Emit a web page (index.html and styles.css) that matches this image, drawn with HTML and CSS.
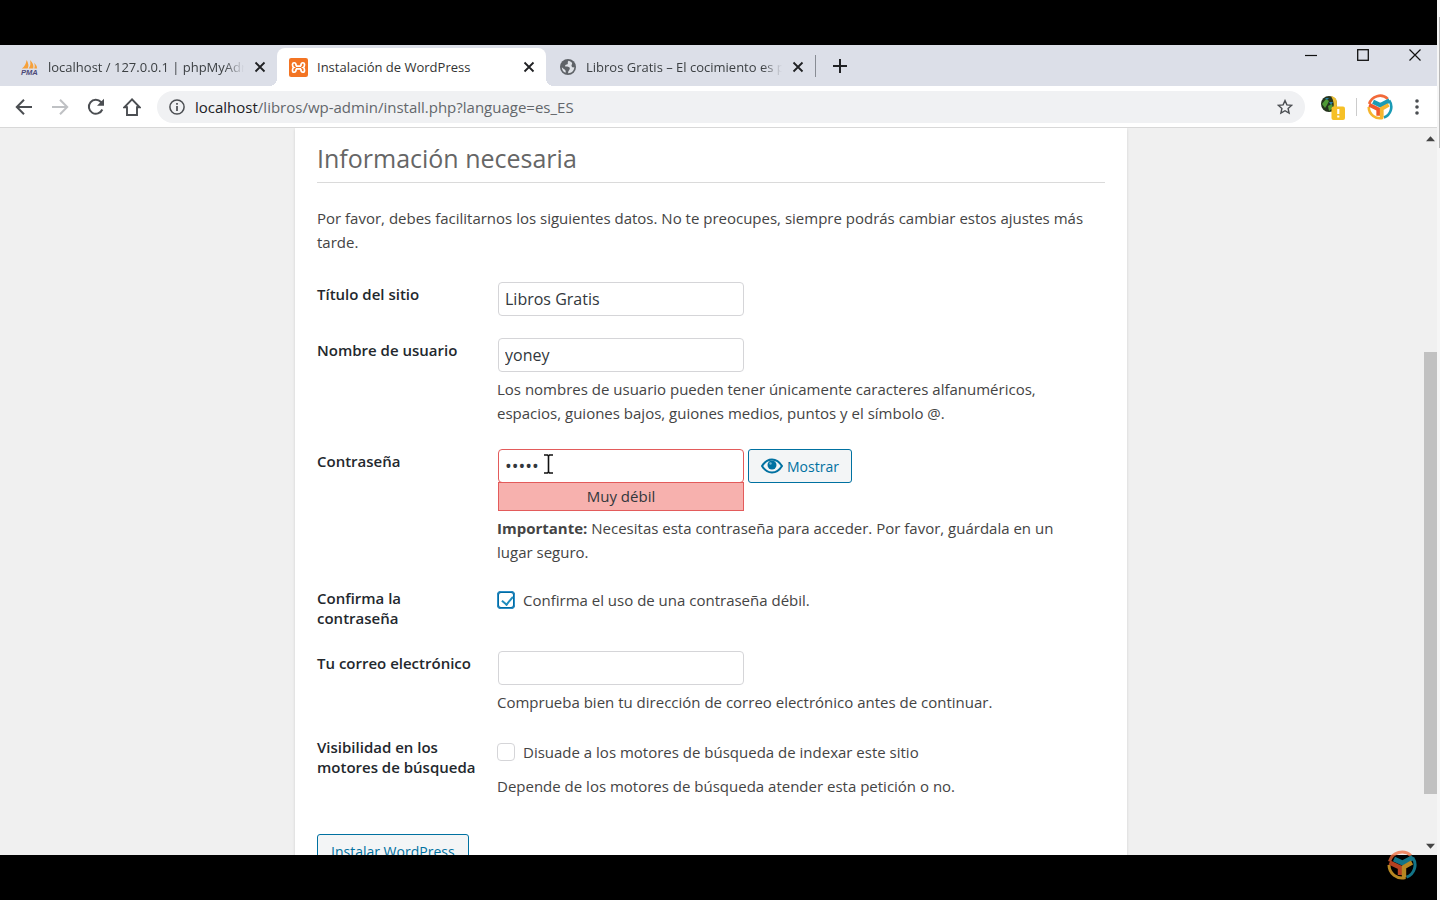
FILE: index.html
```html
<!DOCTYPE html>
<html lang="es">
<head>
<meta charset="utf-8">
<title>Instalación de WordPress</title>
<link rel="stylesheet" href="styles.css">
</head>
<body>
<svg class="defs" aria-hidden="true">
  <symbol id="close" viewBox="0 0 12 12"><path d="M1.500 1.500l9 9M10.500 1.500l-9 9" fill="none" stroke="currentColor" stroke-width="1.800"/></symbol>
  <symbol id="globe" viewBox="0 0 16 16"><circle cx="8" cy="8" r="8" fill="#5f6368"/><path d="M8.500 1.700C7 3 8.500 4 7.500 5.300 6.500 6 5 5.500 5 7.300c2 .7 4.500 0 4.800 2 .2 1.700-1.500 1.800-1.700 4.900 3.500 0 6.200-2.700 6.200-6.200-1.300 1-2.500.2-2.700-1-.5-1.300 1-1.700.4-3.300A6.200 6.200 0 0 0 8.500 1.700zM1.800 8.200c0 2.600 1.500 4.700 3.800 5.600.3-1.500.3-2.600-1-3.400C3.500 9.800 2.800 9 1.800 8.200z" fill="#dee1e6"/></symbol>
  <symbol id="brand" viewBox="0 0 30 30">
    <g fill="none" stroke-width="3">
      <path d="M2.500 11.500A13 13 0 0 1 24 5.600" stroke="#f26a3a"/>
      <path d="M25.700 7.600A13 13 0 0 1 19.500 27.200" stroke="#1a9bb5"/>
      <path d="M18.500 27.500A13 13 0 0 1 2 15" stroke="#f5b52e"/>
      <path d="M2.500 12.500l10.500 5v7.500" stroke="#f0572d" stroke-width="4.400"/>
      <path d="M7 9l8.500 4L26 7.500" stroke="#1a9bb5" stroke-width="5"/>
      <path d="M25 12.500l-8 4.500v10.500" stroke="#f5b52e" stroke-width="4.400"/>
    </g>
  </symbol>
</svg>
<div class="screen">
  <div class="window">
    <header class="tabstrip">
      <div class="tab">
        <svg class="favicon pma" viewBox="0 0 20 18"><path d="M2 10Q6 7 7 1q3 5 1 9zM9 10q3-4 1.500-9Q15 5 14 10zM15 10q1-3 0-6 3 3 3 6z" fill="#f6a13a"/><text x="1" y="17" class="pma-text">PMA</text></svg>
        <span class="tab-title">localhost / 127.0.0.1 | phpMyAdmin</span>
        <button class="tab-close" aria-label="Cerrar pestaña"><svg><use href="#close"/></svg></button>
      </div>
      <div class="tab active">
        <svg class="favicon" viewBox="0 0 18 18"><rect width="18" height="18" rx="2" fill="#f37423"/><path d="M6.500 7.700h5M6.500 10.300h5M6.800 7.600Q6.800 4.500 4.800 4.500 3.300 4.500 3.300 6.500q0 2 1.200 2.500-1.200.5-1.200 2.500 0 2 1.500 2 2 0 2-3.100M11.200 7.600q0-3.100 2-3.100 1.500 0 1.500 2 0 2-1.200 2.500 1.200.5 1.200 2.500 0 2-1.500 2-2 0-2-3.100" fill="none" stroke="#fff" stroke-width="1.600"/></svg>
        <span class="tab-title">Instalación de WordPress</span>
        <button class="tab-close" aria-label="Cerrar pestaña"><svg><use href="#close"/></svg></button>
      </div>
      <div class="tab last">
        <svg class="favicon globe"><use href="#globe"/></svg>
        <span class="tab-title">Libros Gratis – El cocimiento es poder</span>
        <button class="tab-close" aria-label="Cerrar pestaña"><svg><use href="#close"/></svg></button>
      </div>
      <span class="tab-divider"></span>
      <button class="new-tab" aria-label="Nueva pestaña"><svg viewBox="0 0 14 14"><path d="M7 0v14M0 7h14" stroke="#202124" stroke-width="2"/></svg></button>
      <div class="window-controls">
        <button aria-label="Minimizar"><svg viewBox="0 0 12 12"><path d="M0 6.500h12" stroke="#111" stroke-width="1.200"/></svg></button>
        <button aria-label="Maximizar"><svg viewBox="0 0 12 12"><rect x=".7" y=".7" width="10.600" height="10.600" fill="none" stroke="#111" stroke-width="1.300"/></svg></button>
        <button aria-label="Cerrar"><svg viewBox="0 0 12 12"><path d="M.5.5l11 11M11.500.5l-11 11" stroke="#111" stroke-width="1.200"/></svg></button>
      </div>
    </header>
    <nav class="toolbar">
      <button aria-label="Atrás"><svg viewBox="0 0 18 18"><path d="M17 9H2M9 1.800L1.800 9 9 16.200" fill="none" stroke="#4b4e52" stroke-width="2"/></svg></button>
      <button aria-label="Adelante"><svg viewBox="0 0 18 18"><path d="M1 9h15M9 1.800L16.200 9 9 16.200" fill="none" stroke="#bfc1c4" stroke-width="2"/></svg></button>
      <button aria-label="Recargar"><svg viewBox="0 0 18 18"><path d="M15.300 11.500A7 7 0 1 1 14 4l1.500 1.800" fill="none" stroke="#4b4e52" stroke-width="2"/><path d="M17 .8v7h-7z" fill="#4b4e52"/></svg></button>
      <button aria-label="Inicio"><svg viewBox="0 0 18 18"><path d="M9 1.300L1.300 9.300H4V17h10V9.300h2.700z" fill="none" stroke="#4b4e52" stroke-width="1.900"/></svg></button>
      <div class="omnibox">
        <svg class="info" viewBox="0 0 16 16"><circle cx="8" cy="8" r="7.100" fill="none" stroke="#4b4e52" stroke-width="1.500"/><path d="M8 7v5M8 4v1.800" stroke="#4b4e52" stroke-width="1.700"/></svg>
        <div class="url" role="textbox" aria-label="Dirección"><span>localhost</span>/libros/wp-admin/install.php?language=es_ES</div>
        <button aria-label="Añadir a marcadores"><svg class="star" viewBox="0 0 16 16"><path d="M8 1.600l1.900 4.300 4.700.5-3.500 3.100 1 4.600L8 11.700l-4.100 2.400 1-4.600-3.500-3.100 4.700-.5z" fill="none" stroke="#4b4e52" stroke-width="1.400"/></svg></button>
      </div>
      <div class="actions">
        <button class="extension" aria-label="Extensión"><svg viewBox="0 0 26 26"><circle cx="9" cy="10" r="8" fill="#24331c"/><path d="M11 2q7 1 6 9-1 5-5 7 4-8-1-16z" fill="#e9bd35"/><path d="M2 10l4-5 3 2-2 4-2 3zM8 12l4-2 1 4-4 3z" fill="#4f9a35"/><path d="M5 4l4 0-2 2zM9 8l4 0-2 3z" fill="#2780a8"/><rect x="11.500" y="12.500" width="13.500" height="13.500" rx="2" fill="#f6c026"/><path d="M18.300 15v5M18.300 21.500v2" stroke="#fff" stroke-width="2.200"/></svg></button>
        <span class="tool-divider"></span>
        <button class="profile" aria-label="Perfil"><svg><use href="#brand"/></svg></button>
        <button class="menu" aria-label="Menú"><svg viewBox="0 0 4 16"><g fill="#4b4e52"><circle cx="2" cy="2" r="1.800"/><circle cx="2" cy="8" r="1.800"/><circle cx="2" cy="14" r="1.800"/></g></svg></button>
      </div>
    </nav>
    <div class="viewport">
      <main class="card">
        <h1>Información necesaria</h1>
        <p class="intro">Por favor, debes facilitarnos los siguientes datos. No te preocupes, siempre podrás cambiar estos ajustes más tarde.</p>
        <form>
          <div class="row">
            <label class="name" for="title">Título del sitio</label>
            <div class="field"><input class="text" id="title" type="text" value="Libros Gratis"></div>
          </div>
          <div class="row user">
            <label class="name" for="user">Nombre de usuario</label>
            <div class="field"><input class="text" id="user" type="text" value="yoney">
              <p>Los nombres de usuario pueden tener únicamente caracteres alfanuméricos, espacios, guiones bajos, guiones medios, puntos y el símbolo @.</p></div>
          </div>
          <div class="row pass">
            <label class="name" for="pass">Contraseña</label>
            <div class="field">
              <div class="pass-line">
                <div class="pass-box"><input class="text weak" id="pass" type="password" value="yoney">
                  <svg class="cursor" viewBox="0 0 11 20"><path d="M1 1h3.500l1 1 1-1H10M5.500 2v16M1 19h3.500l1-1 1 1H10" fill="none" stroke="#111" stroke-width="1.600"/></svg>
                  <div class="strength">Muy débil</div></div>
                <button class="btn" type="button"><svg viewBox="0 0 22 16"><path d="M1 8Q5 1.500 11 1.500T21 8q-4 6.500-10 6.500T1 8z" fill="none" stroke="#0071a1" stroke-width="2"/><circle cx="11" cy="7" r="4.500" fill="#0071a1"/><circle cx="9.500" cy="5.500" r="1.200" fill="#75b3cf"/></svg>Mostrar</button>
              </div>
              <p><strong>Importante:</strong> Necesitas esta contraseña para acceder. Por favor, guárdala en un lugar seguro.</p>
            </div>
          </div>
          <div class="row confirm">
            <span class="name">Confirma la contraseña</span>
            <div class="field"><label class="check"><input type="checkbox" checked>Confirma el uso de una contraseña débil.</label></div>
          </div>
          <div class="row mail">
            <label class="name" for="mail">Tu correo electrónico</label>
            <div class="field"><input class="text" id="mail" type="email">
              <p>Comprueba bien tu dirección de correo electrónico antes de continuar.</p></div>
          </div>
          <div class="row visibility">
            <span class="name">Visibilidad en los motores de búsqueda</span>
            <div class="field"><label class="check"><input type="checkbox">Disuade a los motores de búsqueda de indexar este sitio</label>
              <p>Depende de los motores de búsqueda atender esta petición o no.</p></div>
          </div>
          <button class="btn install" type="button">Instalar WordPress</button>
        </form>
      </main>
      <div class="scrollbar">
        <svg viewBox="0 0 10 6"><path d="M0 5.500L5 0l5 5.500z" fill="#444"/></svg>
        <div class="track"><div class="thumb"></div></div>
        <svg viewBox="0 0 10 6"><path d="M0 .5L5 6l5-5.500z" fill="#444"/></svg>
      </div>
    </div>
  </div>
  <svg class="watermark"><use href="#brand"/></svg>
</div>
</body>
</html>
```
FILE: styles.css
```css
* { box-sizing: border-box; }
body { margin: 0; background: #f6f6f6; font-family: "Open Sans", "Noto Sans", sans-serif; font-size: 15px; color: #444; }
button { font: inherit; padding: 0; border: 0; background: none; color: inherit; }
svg { display: block; flex: none; }
p { margin: 0; }
.defs { position: absolute; width: 0; height: 0; }
.screen { position: relative; height: 100vh; margin-right: 3px; padding: 45px 0; background: #000; }
.screen::after { content: ""; position: absolute; top: 17px; right: -3px; width: 1px; height: 131px; background: #b8b8b8; }
.window { display: flex; flex-direction: column; height: 100%; background: #f0f0f0; }

.tabstrip { display: flex; flex: none; align-items: center; height: 41px; background: #dcdfe8; padding-left: 8px; }
.tab { display: flex; align-items: center; width: 269px; height: 38px; align-self: flex-end; padding: 0 11px 0 12px; border-radius: 8px 8px 0 0; font-size: 13px; color: #3c4043; }
.tab.active { background: #fff; position: relative; color: #333; }
.tab.last { padding-left: 14px; }
.tab.active::before, .tab.active::after { content: ""; position: absolute; bottom: 0; width: 8px; height: 8px; }
.tab.active::before { left: -8px; background: radial-gradient(circle at 0 0, transparent 8px, #fff 8px); }
.tab.active::after { right: -8px; background: radial-gradient(circle at 100% 0, transparent 8px, #fff 8px); }
.favicon { width: 19px; height: 19px; margin-right: 9px; }
.favicon.globe { width: 16px; height: 16px; margin-right: 10px; }
.pma-text { font: italic bold 8px "Liberation Sans", sans-serif; fill: #4c4a78; }
.tab-title { flex: 1; overflow: hidden; white-space: nowrap; mask-image: linear-gradient(90deg, #000 90%, transparent 100%); }
.active .tab-title { mask-image: none; }
.tab-close { margin-left: 10px; color: #202124; }
.tab-close svg { width: 12px; height: 12px; }
.tab-divider { width: 1px; height: 22px; background: #888c94; }
.new-tab { margin-left: 17px; }
.new-tab svg { width: 14px; height: 14px; }
.window-controls { display: flex; gap: 40px; margin: 0 16px 0 auto; align-self: flex-start; padding-top: 4px; }
.window-controls svg { width: 12px; height: 12px; }

.toolbar { display: flex; flex: none; align-items: center; gap: 18px; height: 42px; padding: 0 18px 0 15px; background: #fff; border-bottom: 1px solid #d8d8d8; }
.toolbar > button svg { width: 18px; height: 18px; }
.omnibox { display: flex; flex: 1; align-items: center; height: 32px; padding: 0 12px; margin: 0 -3px 0 -2px; border-radius: 16px; background: #f0f1f3; }
.info { width: 16px; height: 16px; }
.url { flex: 1; margin-left: 10px; font-size: 15px; color: #63676b; }
.url span { color: #202124; }
.star { width: 16px; height: 16px; }
.actions { display: flex; align-items: center; gap: 10px; }
.extension svg { width: 26px; height: 26px; }
.tool-divider { width: 1px; height: 18px; background: #ccc; }
.profile svg { width: 26px; height: 26px; }
.menu { margin-left: 12px; }
.menu svg { width: 4px; height: 16px; }

.viewport { display: flex; flex: 1; min-height: 0; overflow: hidden; }
.card { flex: 0 1 832px; margin: 0 auto; padding: 14px 22px 0; background: #fff; box-shadow: 0 1px 3px rgba(0,0,0,.13); height: max-content; }
h1 { margin: 0; height: 41px; border-bottom: 1px solid #dadada; font-size: 25px; font-weight: 400; line-height: 32px; color: #666; }
.intro { margin-top: 23px; line-height: 24px; }
form { padding-top: 28px; }
.row { display: grid; grid-template-columns: 160px 1fr; column-gap: 20px; }
.name { padding-top: 2px; font-weight: 600; line-height: 20px; color: #23282d; }
.field { padding-right: 18px; }
.text { width: 246px; height: 34px; padding: 0 6px; border: 1px solid #d5d5d8; border-radius: 4px; background: #fff; font: inherit; font-size: 16px; color: #32373c; display: block; margin-left: 1px; }
.field p { margin-top: 5px; line-height: 24px; }
.user { margin-top: 22px; }
.pass { margin-top: 24px; }
.pass-line { display: flex; gap: 4px; align-items: flex-start; }
.pass-box { position: relative; }
.text.weak { border-color: #e35b5b; font-size: 18px; }
.cursor { position: absolute; left: 46px; top: 5px; width: 11px; height: 20px; }
.strength { width: 246px; height: 29px; margin: -1px 0 0 1px; border: 1px solid #e35b5b; background: #f7b1ae; text-align: center; line-height: 27px; color: #32373c; }
.btn { display: flex; align-items: center; gap: 4px; height: 34px; padding: 0 12px; border: 1px solid #0071a1; border-radius: 3px; background: #f3f5f6; font-size: 14px; color: #0071a1; }
.btn svg { width: 22px; height: 16px; }
.confirm { margin-top: 24px; }
.confirm .name { padding-top: 0; }
.check { display: flex; align-items: center; gap: 8px; height: 24px; }
.check input { appearance: none; flex: none; position: relative; width: 18px; height: 18px; margin: 0; border: 1px solid #d5d5d8; border-radius: 4px; background: #fff; }
.check input:checked { border: 2px solid #006ba1; outline: 1px solid #2d8fc9; outline-offset: -1px; }
.check input:checked::before { content: ""; position: absolute; left: 5px; top: 1px; width: 5px; height: 9px; border: solid #1e8cbe; border-width: 0 2px 2px 0; transform: rotate(40deg); }
.mail { margin-top: 23px; }
.visibility { margin-top: 23px; }
.visibility .name { padding-top: 0; }
.visibility .check { margin-top: 3px; }
.visibility p { margin-top: 10px; }
.install { margin-top: 36px; padding: 0 13px; }
.scrollbar { display: flex; flex-direction: column; align-items: center; width: 13px; margin-left: 2px; padding: 8px 0 6px; }
.scrollbar svg { width: 9px; height: 6px; }
.track { flex: 1; align-self: stretch; padding: 210px 0 0; }
.thumb { height: 442px; background: #c1c1c1; }
.watermark { position: absolute; right: 20px; bottom: 20px; width: 30px; height: 30px; opacity: .75; }
```
